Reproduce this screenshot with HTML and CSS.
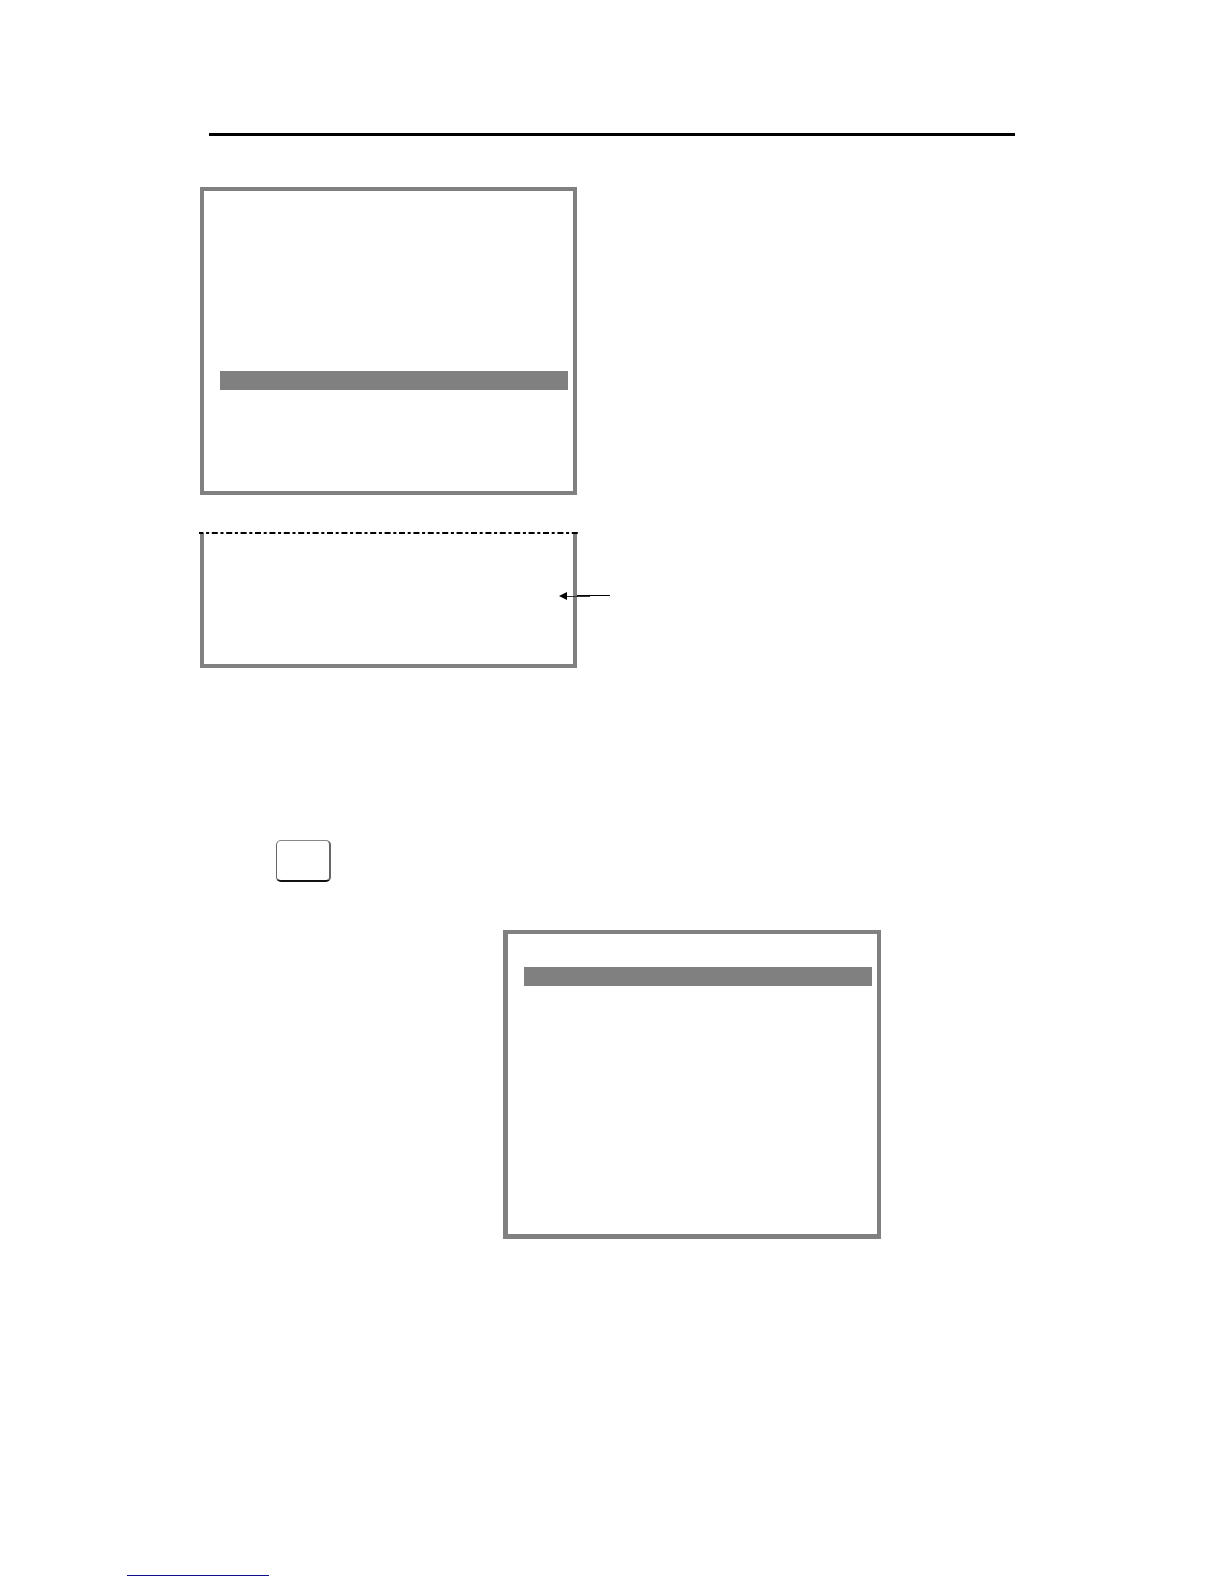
FILE: index.html
```html
<!DOCTYPE html>
<html lang="en">
<head>
<meta charset="utf-8">
<title>Menu screens</title>
<link rel="stylesheet" href="styles.css">
</head>
<body>
<main class="page">
  <hr class="rule">
  <section class="screen">
    <div class="selected"></div>
  </section>
  <section class="screen continued">
    <svg class="break" height="2" aria-hidden="true">
      <line class="break-line" x1="0" y1="1" x2="379" y2="1"/>
    </svg>
    <svg class="pointer" width="51" height="8" viewBox="0 0 51 8" aria-hidden="true">
      <path d="M7 4.5H31" stroke="#333" stroke-width="1"/>
      <path d="M18 3.5H51" stroke="#000" stroke-width="1"/>
      <path d="M0 4L8 0V8Z"/>
    </svg>
  </section>
  <button class="key" type="button" aria-label="Menu"></button>
  <section class="screen second">
    <div class="selected"></div>
  </section>
</main>
<footer class="footer">
  <a class="link" href="#" aria-label="Top"></a>
</footer>
</body>
</html>
```
FILE: styles.css
```css
* {
  box-sizing: border-box;
}

body {
  margin: 0;
  background: #fff;
  font-family: "Liberation Sans", Arial, sans-serif;
}

.page {
  display: flex;
  flex-direction: column;
  align-items: flex-start;
  padding: 133px 200px 0;
}

.rule {
  align-self: stretch;
  height: 3px;
  margin: 0 9px 51px;
  border: 0;
  background: #000;
}

.screen {
  width: 377px;
  max-width: 100%;
  min-height: 308px;
  padding: 180px 5px 101px 16px;
  border: 4px solid #808080;
}

.selected {
  height: 19px;
  background: #808080;
}

.continued {
  position: relative;
  min-height: 135px;
  margin-top: 38px;
  padding: 0;
  border-top: 0;
}

.break {
  position: absolute;
  top: -1px;
  left: -5px;
  width: 379px;
}

.break-line {
  stroke: #000;
  stroke-width: 2;
  stroke-dasharray: 6 2.7 3 2.7;
  stroke-dashoffset: 1.6;
}

.pointer {
  position: absolute;
  top: 59px;
  right: -37px;
}

.key {
  width: 55px;
  height: 42px;
  margin: 172px 0 0 76px;
  padding: 0;
  border: solid;
  border-width: 1px 2px 2px 1px;
  border-color: #888 #666 #111 #666;
  border-radius: 5px;
  background: #fff;
}

.second {
  width: 378px;
  min-height: 309px;
  margin: 48px 0 0 303px;
  padding: 33px 5px 0 16px;
  border-width: 4px 4px 5px 5px;
}

.footer {
  padding: 319px 127px 8px;
}

.link {
  display: block;
  width: 142px;
  height: 18px;
  border-bottom: 1px solid #101088;
}
```
